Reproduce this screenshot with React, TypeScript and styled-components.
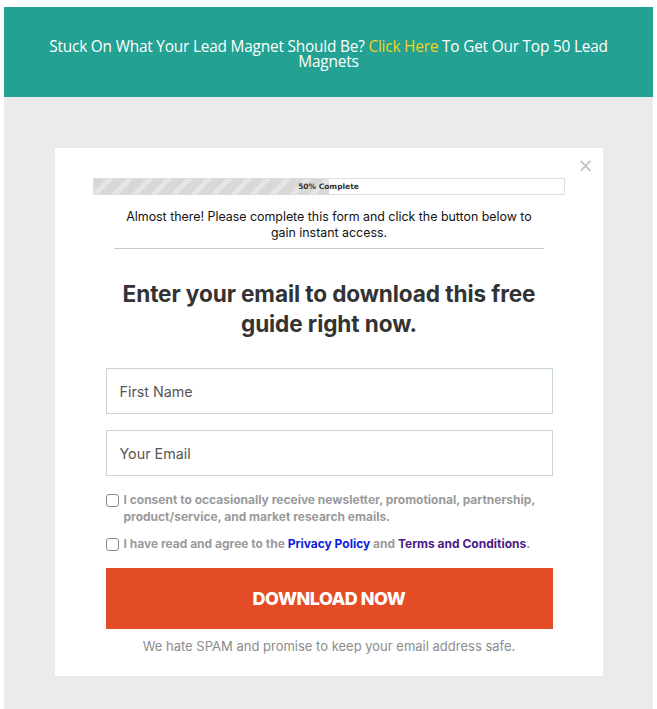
import styled, { createGlobalStyle } from "styled-components";

const GlobalStyle = createGlobalStyle`
    html, body {
        margin: 0;
        padding: 0;
        background: #fff;
    }
    * {
        box-sizing: border-box;
    }
`

const Page = styled.div`
    width: 657px;
    min-height: 709px;
    display: flex;
    flex-direction: column;
    padding: 7px 4px 0;
    background: #fff;
`

const Banner = styled.div`
    height: 90px;
    background: #23a192;
    display: flex;
    align-items: center;
    justify-content: center;
    padding: 3px 40px 0;
    text-align: center;
    font-family: "Open Sans", sans-serif;
    font-size: 15.4px;
    line-height: 15px;
    color: #fff;
    letter-spacing: -0.2px;
`

const BannerLink = styled.a`
    color: #f1d31a;
`

const Stage = styled.div`
    flex: 1;
    background: #ebebeb;
    padding: 51px 0 34px;
`

const Modal = styled.div`
    position: relative;
    width: 548px;
    margin: 0 auto;
    background: #fff;
    padding: 30px 50px 21px 51px;
    font-family: "Inter", "Liberation Sans", sans-serif;
`

const Close = styled.span`
    position: absolute;
    top: 8px;
    right: 9px;
    font-family: "DejaVu Sans", sans-serif;
    font-size: 19px;
    color: #c2c2c2;
    line-height: 1;
`

const Progress = styled.div`
    position: relative;
    height: 17px;
    margin: 0 -12px 0 -13px;
    border: 1px solid #dedede;
    background: #fff;
    display: flex;
    align-items: center;
    justify-content: center;
`

const ProgressFill = styled.div`
    position: absolute;
    left: 0;
    top: 0;
    bottom: 0;
    background: repeating-linear-gradient(
        -45deg,
        #d8d8d8 0px,
        #d8d8d8 9px,
        #e6e6e6 9px,
        #e6e6e6 14px
    );
`

const ProgressLabel = styled.span`
    position: relative;
    font-family: "DejaVu Sans", sans-serif;
    font-size: 7.5px;
    font-weight: 700;
    color: #333;
`

const Intro = styled.p`
    margin: 14px 0 0;
    padding: 0 18px;
    text-align: center;
    font-size: 12.4px;
    line-height: 16px;
    color: #111;
`

const Divider = styled.hr`
    margin: 7px 9px 0 8px;
    border: none;
    border-top: 1px solid #c9c9c9;
`

const Heading = styled.h2`
    margin: 30px 0 0;
    text-align: center;
    font-size: 22.6px;
    line-height: 30px;
    font-weight: 700;
    color: #333;
    letter-spacing: -0.1px;
`

const Fields = styled.div`
    display: flex;
    flex-direction: column;
    gap: 16px;
    margin-top: 29px;
`

const Field = styled.input`
    width: 100%;
    height: 46px;
    border: 1px solid #c7d4dc;
    outline: none;
    padding: 0 13px;
    font-family: "Inter", "Liberation Sans", sans-serif;
    font-size: 14.3px;
    color: #555;
    &::placeholder {
        color: #555;
    }
`

const Checks = styled.div`
    display: flex;
    flex-direction: column;
    gap: 10px;
    margin-top: 15px;
`

const CheckRow = styled.label`
    display: flex;
    align-items: flex-start;
    gap: 5px;
    font-size: 12px;
    line-height: 17px;
    font-weight: 700;
    color: #9a9a9a;
`

const Box = styled.span`
    flex: none;
    width: 13px;
    height: 13px;
    margin-top: 3px;
    border: 1px solid #8a8a8a;
    border-radius: 3px;
    background: #fff;
`

const Link = styled.a<{ $tone: string }>`
    color: ${p => p.$tone};
    text-decoration: none;
`

const Button = styled.button`
    width: 100%;
    height: 61px;
    margin-top: 16px;
    border: none;
    background: #e44c27;
    color: #fff;
    font-family: "Inter", "Liberation Sans", sans-serif;
    font-size: 18px;
    font-weight: 800;
    letter-spacing: -0.5px;
`

const Note = styled.p`
    margin: 9px 0 0;
    text-align: center;
    font-size: 13px;
    line-height: 17px;
    color: #8c8c8c;
`

export default function App() {
    const progress = 50
    return (
        <Page>
            <GlobalStyle />
            <Banner>
                <div>
                    Stuck On What Your Lead Magnet Should Be? <BannerLink>Click Here</BannerLink> To Get Our Top 50 Lead Magnets
                </div>
            </Banner>
            <Stage>
                <Modal>
                    <Close>×</Close>
                    <Progress>
                        <ProgressFill style={{ width: `${progress}%` }} />
                        <ProgressLabel>{progress}% Complete</ProgressLabel>
                    </Progress>
                    <Intro>Almost there! Please complete this form and click the button below to gain instant access.</Intro>
                    <Divider />
                    <Heading>Enter your email to download this free<br />guide right now.</Heading>
                    <Fields>
                        <Field placeholder="First Name" />
                        <Field placeholder="Your Email" />
                    </Fields>
                    <Checks>
                        <CheckRow>
                            <Box />
                            <span>I consent to occasionally receive newsletter, promotional, partnership, product/service, and market research emails.</span>
                        </CheckRow>
                        <CheckRow>
                            <Box />
                            <span>
                                I have read and agree to the <Link $tone="#0b1fe0">Privacy Policy</Link> and <Link $tone="#4b1a86">Terms and Conditions</Link>.
                            </span>
                        </CheckRow>
                    </Checks>
                    <Button>DOWNLOAD NOW</Button>
                    <Note>We hate SPAM and promise to keep your email address safe.</Note>
                </Modal>
            </Stage>
        </Page>
    )
}
